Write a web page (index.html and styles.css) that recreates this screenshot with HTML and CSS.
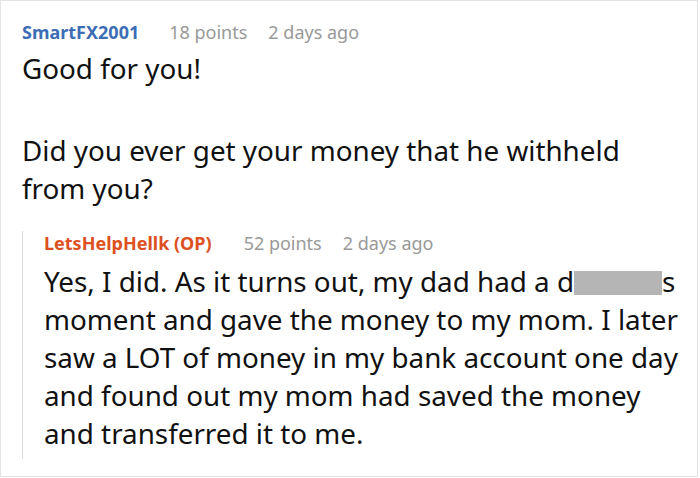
FILE: index.html
```html
<!DOCTYPE html>
<html>
<head>
<meta charset="utf-8">
<link rel="stylesheet" href="styles.css">
</head>
<body>
<div class="thread">
  <div class="comment">
    <div class="meta">
      <span class="author blue">SmartFX2001</span>
      <span class="info">18 points</span>
      <span class="info">2 days ago</span>
    </div>
    <div class="body">
      <p>Good for you!</p>
      <p>Did you ever get your money that he withheld from you?</p>
    </div>
    <div class="reply">
      <div class="meta">
        <span class="author orange">LetsHelpHellk (OP)</span>
        <span class="info">52 points</span>
        <span class="info">2 days ago</span>
      </div>
      <div class="body">
        <p>Yes, I did. As it turns out, my dad had a d<span class="redact"></span>s moment and gave the money to my mom. I later saw a LOT of money in my bank account one day and found out my mom had saved the money and transferred it to me.</p>
      </div>
    </div>
  </div>
</div>
</body>
</html>
```
FILE: styles.css
```css
html, body {
  margin: 0;
  padding: 0;
  background: #ffffff;
}
.thread {
  width: 696px;
  height: 475px;
  border: 1px solid #e3e3e3;
  font-family: "Noto Sans", "Open Sans", sans-serif;
  color: #111111;
  overflow: hidden;
}
.comment {
  padding: 19px 20px 0 21px;
}
.meta {
  display: flex;
  gap: 21px;
  font-size: 18px;
  line-height: 24px;
}
.author {
  font-weight: 700;
  margin-right: 9px;
}
.reply .author {
  margin-right: 11px;
}
.blue { color: #3d6db5; }
.orange { color: #dd5020; }
.info { color: #999999; }
.body {
  font-size: 27.8px;
  line-height: 38px;
  margin-top: 5px;
}
.body p {
  margin: 0 0 44px 0;
}
.body p:last-child {
  margin-bottom: 0;
}
.reply {
  margin-top: 35px;
  border-left: 1px solid #dddddd;
  padding: 0 0 7px 21px;
  margin-right: -10px;
}
.reply .meta {
  margin-top: -11px;
}
.reply .body {
  margin-top: 7px;
}
.redact {
  display: inline-block;
  width: 88px;
  height: 24px;
  background: #b5b5b5;
  vertical-align: -3px;
}
```
